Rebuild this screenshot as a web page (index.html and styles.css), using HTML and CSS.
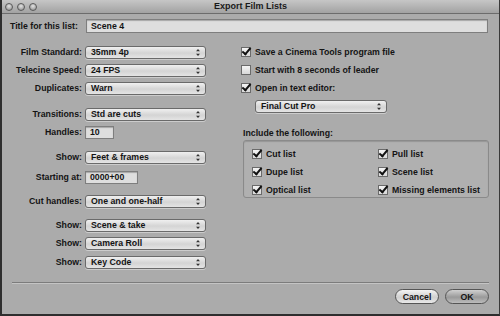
FILE: index.html
```html
<!DOCTYPE html>
<html>
<head>
    <meta charset="UTF-8">
    <title>Export Film Lists</title>
    <link rel="stylesheet" href="styles.css">
</head>
<body>
    <div class="window">
        <!-- 標題列 -->
        <div class="titlebar">
            <div class="lights">
                <span class="light"></span>
                <span class="light"></span>
                <span class="light"></span>
            </div>
            <div class="win-title">Export Film Lists</div>
        </div>

        <div class="content">
            <div class="title-row">
                <label class="title-label">Title for this list:</label>
                <div class="field wide">Scene 4</div>
            </div>

            <div class="main">
                <!-- 左欄 -->
                <div class="left">
                    <div class="row"><span class="lbl">Film Standard:</span><div class="popup">35mm 4p<svg class="arrows" viewBox="0 0 5 9"><path d="M2.5 0 L5 3 L0 3 Z M2.5 9 L5 6 L0 6 Z"/></svg></div></div>
                    <div class="row"><span class="lbl">Telecine Speed:</span><div class="popup">24 FPS<svg class="arrows" viewBox="0 0 5 9"><path d="M2.5 0 L5 3 L0 3 Z M2.5 9 L5 6 L0 6 Z"/></svg></div></div>
                    <div class="row"><span class="lbl">Duplicates:</span><div class="popup">Warn<svg class="arrows" viewBox="0 0 5 9"><path d="M2.5 0 L5 3 L0 3 Z M2.5 9 L5 6 L0 6 Z"/></svg></div></div>

                    <div class="row gap8"><span class="lbl">Transitions:</span><div class="popup">Std are cuts<svg class="arrows" viewBox="0 0 5 9"><path d="M2.5 0 L5 3 L0 3 Z M2.5 9 L5 6 L0 6 Z"/></svg></div></div>
                    <div class="row"><span class="lbl">Handles:</span><div class="field small">10</div></div>

                    <div class="row gap7"><span class="lbl">Show:</span><div class="popup">Feet &amp; frames<svg class="arrows" viewBox="0 0 5 9"><path d="M2.5 0 L5 3 L0 3 Z M2.5 9 L5 6 L0 6 Z"/></svg></div></div>
                    <div class="row gap2"><span class="lbl">Starting at:</span><div class="field medium">0000+00</div></div>

                    <div class="row gap6"><span class="lbl">Cut handles:</span><div class="popup">One and one-half<svg class="arrows" viewBox="0 0 5 9"><path d="M2.5 0 L5 3 L0 3 Z M2.5 9 L5 6 L0 6 Z"/></svg></div></div>

                    <div class="row gap6"><span class="lbl">Show:</span><div class="popup">Scene &amp; take<svg class="arrows" viewBox="0 0 5 9"><path d="M2.5 0 L5 3 L0 3 Z M2.5 9 L5 6 L0 6 Z"/></svg></div></div>
                    <div class="row"><span class="lbl">Show:</span><div class="popup">Camera Roll<svg class="arrows" viewBox="0 0 5 9"><path d="M2.5 0 L5 3 L0 3 Z M2.5 9 L5 6 L0 6 Z"/></svg></div></div>
                    <div class="row gap1"><span class="lbl">Show:</span><div class="popup">Key Code<svg class="arrows" viewBox="0 0 5 9"><path d="M2.5 0 L5 3 L0 3 Z M2.5 9 L5 6 L0 6 Z"/></svg></div></div>
                </div>

                <!-- 右欄 -->
                <div class="right">
                    <div class="row"><span class="check on"></span>Save a Cinema Tools program file</div>
                    <div class="row"><span class="check"></span>Start with 8 seconds of leader</div>
                    <div class="row"><span class="check on"></span>Open in text editor:</div>
                    <div class="row indent"><div class="popup editor">Final Cut Pro<svg class="arrows" viewBox="0 0 5 9"><path d="M2.5 0 L5 3 L0 3 Z M2.5 9 L5 6 L0 6 Z"/></svg></div></div>

                    <div class="group-title">Include the following:</div>
                    <div class="group">
                        <div class="row"><span class="check on"></span>Cut list</div>
                        <div class="row"><span class="check on"></span>Pull list</div>
                        <div class="row"><span class="check on"></span>Dupe list</div>
                        <div class="row"><span class="check on"></span>Scene list</div>
                        <div class="row"><span class="check on"></span>Optical list</div>
                        <div class="row"><span class="check on"></span>Missing elements list</div>
                    </div>
                </div>
            </div>

            <div class="separator"></div>

            <div class="buttons">
                <button class="btn">Cancel</button>
                <button class="btn default">OK</button>
            </div>
        </div>
    </div>
</body>
</html>
```

FILE: styles.css
```css
* {
    margin: 0;
    padding: 0;
    box-sizing: border-box;
}

body {
    font-family: "Liberation Sans", Arial, sans-serif;
    font-size: 8.75px;
    font-weight: bold;
    color: #141414;
    background: #2a2a2a;
    width: 500px;
    height: 316px;
    overflow: hidden;
}

.window {
    width: 500px;
    height: 316px;
    background: #ababab;
    border-left: 2px solid #2e2e2e;
    border-right: 1px solid #3a3a3a;
    border-bottom: 2px solid #2e2e2e;
    display: flex;
    flex-direction: column;
}

/* 標題列 */
.titlebar {
    height: 14px;
    background: linear-gradient(#c6c6c6, #a2a2a2);
    border-bottom: 1px solid #6c6c6c;
    display: flex;
    align-items: center;
    position: relative;
}

.lights {
    display: flex;
    gap: 4px;
    padding-left: 3px;
}

.light {
    width: 8px;
    height: 8px;
    border-radius: 50%;
    background: radial-gradient(circle at 50% 35%, #e2e2e2, #8a8a8a);
    border: 1px solid #5a5a5a;
}

.win-title {
    position: absolute;
    left: 0;
    right: 0;
    top: 1px;
    text-align: center;
    font-size: 9px;
    color: #1a1a1a;
}

.content {
    flex: 1;
    display: flex;
    flex-direction: column;
    padding-top: 5px;
}

.title-row {
    display: flex;
    align-items: center;
    height: 14px;
}

.title-label {
    padding-left: 8px;
    width: 84px;
}

.field {
    height: 14px;
    background: #dedede;
    border: 1px solid #7e7e7e;
    box-shadow: inset 0 1px 1px rgba(0, 0, 0, 0.25);
    padding: 0 4px;
    display: flex;
    align-items: center;
}

.field.wide {
    width: 402px;
}

.field.small {
    width: 29px;
    height: 13px;
}

.field.medium {
    width: 53px;
    height: 13px;
}

.main {
    display: flex;
    margin-top: 10px;
}

.left {
    width: 239px;
}

.right {
    flex: 1;
    padding-right: 10px;
}

.row {
    display: flex;
    align-items: center;
    height: 18px;
}

.gap1 { margin-top: 1px; }
.gap2 { margin-top: 2px; }
.gap6 { margin-top: 6px; }
.gap7 { margin-top: 7px; }
.gap8 { margin-top: 8px; }

.lbl {
    width: 83px;
    padding-right: 3px;
    text-align: right;
}

.popup {
    width: 121px;
    height: 13px;
    border: 1px solid #6a6a6a;
    border-radius: 3px;
    background: linear-gradient(#f0f0f0, #d4d4d4 55%, #e4e4e4);
    box-shadow: 0 1px 0 rgba(255, 255, 255, 0.4);
    padding-left: 5px;
    display: flex;
    align-items: center;
    position: relative;
}

.popup.editor {
    width: 132px;
}

.arrows {
    position: absolute;
    right: 5px;
    top: 1px;
    width: 4px;
    height: 9px;
    fill: #333;
}

.check {
    width: 10px;
    height: 10px;
    border: 1px solid #6a6a6a;
    background: linear-gradient(#f4f4f4, #d8d8d8);
    margin-right: 4px;
    position: relative;
    flex-shrink: 0;
}

.check.on::after {
    content: "";
    position: absolute;
    left: 2px;
    top: -2px;
    width: 3px;
    height: 7px;
    border-right: 2px solid #111;
    border-bottom: 2px solid #111;
    transform: rotate(40deg);
}

.indent {
    padding-left: 14px;
}

.group-title {
    margin-top: 12px;
    height: 12px;
    padding-left: 2px;
    display: flex;
    align-items: center;
}

.group {
    margin-top: 1px;
    margin-left: 2px;
    height: 58px;
    border: 1px solid #8a8a8a;
    border-radius: 3px;
    background: #b0b0b0;
    box-shadow: inset 0 1px 1px rgba(0, 0, 0, 0.15);
    padding: 4px 0 0 8px;
    display: grid;
    grid-template-columns: 126px 1fr;
}

.separator {
    margin: 11px 10px 0 10px;
    height: 1px;
    background: #7c7c7c;
    box-shadow: 0 1px 0 #c4c4c4;
}

.buttons {
    display: flex;
    justify-content: flex-end;
    gap: 6px;
    padding-right: 10px;
    margin-top: 6px;
}

.btn {
    font-family: "Liberation Sans", Arial, sans-serif;
    font-size: 8.75px;
    font-weight: bold;
    color: #141414;
    width: 44px;
    height: 15px;
    border: 1px solid #555;
    border-radius: 8px;
    background: linear-gradient(#f4f4f4, #d0d0d0 55%, #e8e8e8);
}

.btn.default {
    background: linear-gradient(#d0d0d0, #9a9a9a 55%, #bcbcbc);
}
```
